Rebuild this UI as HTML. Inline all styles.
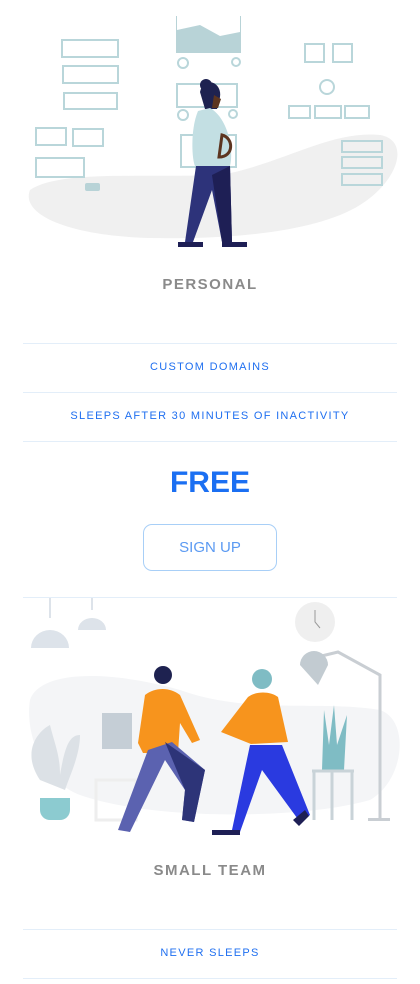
<!DOCTYPE html>
<html><head><meta charset="utf-8"><style>
*{margin:0;padding:0;box-sizing:border-box}
body{width:420px;height:984px;background:#fff;position:relative;overflow:hidden;font-family:"Liberation Sans",sans-serif}
.a{position:absolute;left:0;width:420px;text-align:center}
.hr{position:absolute;left:23px;width:374px;height:1px;background:#e3eef9}
.t{font-size:15px;font-weight:bold;color:#8a8a8a;letter-spacing:1.5px}
.f{font-size:11px;color:#1f6ff0;letter-spacing:1.3px}
.btn{position:absolute;left:143px;top:524px;width:134px;height:47px;border:1px solid #a8cff7;border-radius:9px;color:#5b9af2;font-size:15px;text-align:center;line-height:45px}
</style></head><body>
<svg class="a" style="top:0" width="420" height="260" viewBox="0 0 420 260">
<path d="M30 190 C60 170 140 178 220 175 C280 165 330 130 380 135 C410 140 400 180 360 205 C320 230 240 240 150 238 C70 236 20 215 30 190Z" fill="#f0f0f0"/>
<g fill="none" stroke="#b9d6da" stroke-width="2">
<rect x="62" y="40" width="56" height="17"/><rect x="63" y="66" width="55" height="17"/><rect x="64" y="93" width="53" height="16"/>
<rect x="36" y="128" width="30" height="17"/><rect x="73" y="129" width="30" height="17"/><rect x="36" y="158" width="48" height="19"/>
<rect x="177" y="84" width="60" height="23"/><rect x="305" y="44" width="19" height="18"/><rect x="333" y="44" width="19" height="18"/>
<circle cx="327" cy="87" r="7"/><rect x="289" y="106" width="21" height="12"/><rect x="315" y="106" width="26" height="12"/><rect x="345" y="106" width="24" height="12"/>
<rect x="342" y="141" width="40" height="11"/><rect x="342" y="157" width="40" height="11"/><rect x="342" y="174" width="40" height="11"/>
<circle cx="183" cy="63" r="5"/><circle cx="236" cy="62" r="4"/><circle cx="183" cy="115" r="5"/><circle cx="233" cy="114" r="4"/>
<rect x="181" y="135" width="55" height="32"/>
</g>
<rect x="176" y="16" width="65" height="37" fill="#b8d3d7"/><path d="M177 30 L200 25 L220 36 L240 32 L240 16 L177 16Z" fill="#fff"/>
<rect x="85" y="183" width="15" height="8" rx="2" fill="#b8d3d7"/>
<circle cx="206" cy="85" r="6" fill="#1e2250"/><path d="M200 92 a10 12 0 0 1 20 5 l-3 12 -12 0z" fill="#1e2250"/>
<path d="M214 95 l7 4 -3 9 -6 0z" fill="#5c3520"/>
<path d="M198 111 C190 130 192 160 195 166 L230 166 C234 150 228 118 210 108Z" fill="#c3dfe3"/>
<path d="M222 135 c12 3 12 22 -3 22 z" fill="#c3dfe3" stroke="#5c3520" stroke-width="3"/>
<path d="M196 166 L185 242 L193 242 L212 190 L222 242 L232 242 L230 166Z" fill="#2d337a"/>
<path d="M212 175 L222 242 L232 242 L230 166Z" fill="#1e1f55"/>
<path d="M178 242 h25 v5 h-25z M222 242 h25 v5 h-25z" fill="#1e1f55"/>
</svg>
<div class="a t" style="top:276px">PERSONAL</div>
<div class="hr" style="top:343px"></div>
<div class="a f" style="top:361px">CUSTOM DOMAINS</div>
<div class="hr" style="top:392px"></div>
<div class="a f" style="top:410px">SLEEPS AFTER 30 MINUTES OF INACTIVITY</div>
<div class="hr" style="top:441px"></div>
<div class="a" style="top:466px;font-size:30px;font-weight:bold;color:#1b6ff2">FREE</div>
<div class="btn">SIGN UP</div>
<div class="hr" style="top:597px"></div>
<svg class="a" style="top:598px" width="420" height="240" viewBox="0 598 420 240">
<path d="M30 700 C40 670 110 670 180 690 C250 715 320 700 380 710 C410 720 405 780 370 800 C300 820 150 820 80 795 C40 780 25 730 30 700Z" fill="#f4f5f7"/>
<path d="M50 598 v20 M92 598 v12" stroke="#dde3ea" stroke-width="2"/>
<path d="M31 648 a19 18 0 0 1 38 0z M78 630 a14 12 0 0 1 28 0z" fill="#dde3ea"/>
<circle cx="315" cy="622" r="20" fill="#efefef"/><path d="M315 610 v12 l5 6" stroke="#999" fill="none"/>
<path d="M305 660 L338 652 L380 675 V818" stroke="#c9ced3" stroke-width="3" fill="none"/><rect x="368" y="818" width="22" height="3" fill="#c9ced3"/>
<path d="M300 665 a14 14 0 0 1 28 0 l-10 20z" fill="#c2cbd1"/>
<rect x="102" y="713" width="30" height="36" fill="#c5ced6"/><rect x="96" y="780" width="40" height="40" fill="none" stroke="#eee" stroke-width="3"/>
<path d="M40 780 c-20-30 0-50 10-55 c5 20 10 30 10 50 c5-30 10-40 20-40 c0 20 -10 40 -15 55z" fill="#dce1e6"/>
<path d="M40 798 h30 v12 a10 10 0 0 1 -10 10 h-10 a10 10 0 0 1 -10 -10z" fill="#8ccbd0"/>
<path d="M322 770 l2-60 5 35 5-40 3 40 10-30 -3 55z" fill="#7fbcc4"/>
<path d="M314 772 v48 M332 772 v48 M352 772 v48 M312 771 h42" stroke="#c9d3d8" stroke-width="3"/>
<circle cx="163" cy="675" r="9" fill="#1e2250"/>
<path d="M145 695 c10-8 25-8 35 0 l20 45 -8 3 -12-20 -2 30 -35 0 -5 -10z" fill="#f7941d"/>
<path d="M148 750 L118 830 L130 832 L165 760 L185 790 L182 820 L194 822 L205 770 L172 742Z" fill="#5b62b0"/>
<path d="M165 742 L205 770 L194 822 L182 820 L185 790Z" fill="#2d3478"/>
<circle cx="262" cy="679" r="10" fill="#7fbcc4"/>
<path d="M248 697 c8-6 22-6 30 0 l10 45 -37 2 -30 -12z" fill="#f7941d"/>
<path d="M250 745 L232 830 L240 832 L262 770 L300 822 L310 815 L282 745Z" fill="#2a3ae0"/>
<path d="M212 830 h28 v5 h-28z M293 820 l12-10 4 6 -10 10z" fill="#1e1f55"/>
</svg>
<div class="a t" style="top:862px">SMALL TEAM</div>
<div class="hr" style="top:929px"></div>
<div class="a f" style="top:947px">NEVER SLEEPS</div>
<div class="hr" style="top:978px"></div>
</body></html>
